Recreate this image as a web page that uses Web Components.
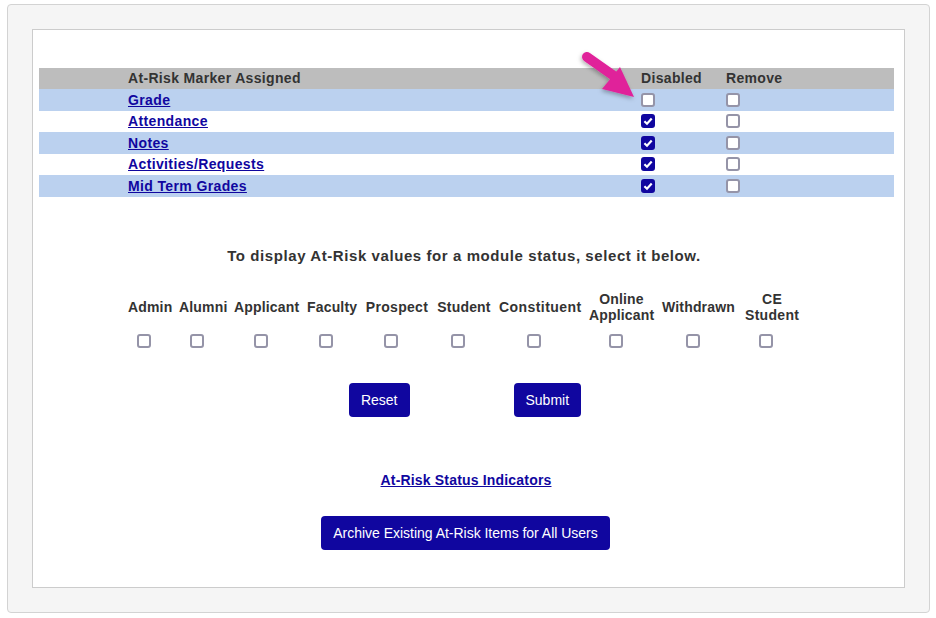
<!DOCTYPE html>
<html lang="en"><head><meta charset="utf-8"><title>At-Risk</title>
<style>
html,body{margin:0;padding:0;background:#fff}
body{font:14px "Liberation Sans",Arial,sans-serif;color:#333}
</style></head><body>
<risk-page></risk-page>
<script>
function el(name, css, html){
  customElements.define(name, class extends HTMLElement{
    constructor(){super();const r=this.attachShadow({mode:'open'});r.innerHTML='<style>'+css+'</style>'+(typeof html==='function'?html(this):html);}
  });
}
el('risk-check',`:host{display:inline-block;width:14px;height:14px;line-height:0;vertical-align:top}
svg{display:block}`,`<svg width="14" height="14" viewBox="0 0 14 14"><rect class="b" x="1" y="1" width="12" height="12" rx="2" fill="#fff" stroke="#9594a8" stroke-width="2"/><path class="c" d="M3.4 7.2 6 9.7 10.7 4.5" fill="none" stroke="#fff" stroke-width="2.2" style="display:none"/></svg>`);
el('risk-link',`:host{display:inline}
a{color:#10069f;font-weight:700;letter-spacing:var(--ls,.37px);text-decoration:underline}`,`<a href="#"><slot></slot></a>`);
el('risk-button',`:host{display:inline-block}
button{display:block;height:34px;padding:0 12px;border:0;border-radius:4px;background:#10069f;color:#fff;font:14px "Liberation Sans",Arial,sans-serif;letter-spacing:var(--bls,0);white-space:nowrap}`,`<button type="button"><slot></slot></button>`);
el('risk-row',`:host{display:grid;grid-template-columns:89px 513px 85px 1fr;align-items:center;height:21.5px;background:var(--bg,#fff)}
.a{grid-column:2}.b{display:flex;align-items:center}`,`<div class="a"><slot name="name"></slot></div><div class="b"><slot name="dis"></slot></div><div class="b"><slot name="rem"></slot></div>`);
el('risk-table',`:host{display:block;margin:0 10px 0 6px;font-weight:700}
.h{display:grid;grid-template-columns:89px 513px 85px 1fr;align-items:center;box-sizing:border-box;height:21px;padding-bottom:1px;background:#bdbdbd;color:#333;letter-spacing:.33px}
.h div:first-child{grid-column:2}`,`<div class="h"><div>At-Risk Marker Assigned</div><div>Disabled</div><div>Remove</div></div><slot></slot>`);
el('risk-status',`:host{display:grid;grid-auto-flow:column;grid-template-rows:32px 14px;grid-template-columns:43px 47px 65px 50px 64px 54px 82px 65px 75px 54px;row-gap:11px;column-gap:8px;justify-content:start;margin-left:95px;font-weight:700;letter-spacing:.17px;line-height:16px;text-align:center}
.l{align-self:center}.c{padding-right:12px;line-height:0}
.w{padding-right:2px}.wc{padding-right:13px}.k{letter-spacing:.44px}.p{letter-spacing:.3px}.s{letter-spacing:.3px}`,(h)=>{
  const n=[['Admin'],['Alumni'],['Applicant'],['Faculty'],['Prospect','','p'],['Student'],['Constituent','','k'],['Online','Applicant'],['Withdrawn','','w'],['CE','Student','s']];
  return n.map(x=>`<div class="l ${x[2]||''}">${x[1]?x[0]+'<br>'+x[1]:x[0]}</div><div class="c ${x[2]==='w'?'wc':''}"><risk-check></risk-check></div>`).join('');
});
el('risk-arrow',`:host{position:absolute;left:567px;top:42px;width:70px;height:60px;pointer-events:none}
svg{display:block;overflow:visible}`,`<svg width="70" height="60" viewBox="0 0 70 60"><defs><filter id="s" x="-30%" y="-30%" width="160%" height="160%"><feDropShadow dx="-1" dy="2" stdDeviation="2" flood-color="#000" flood-opacity=".3"/></filter></defs><g filter="url(#s)" fill="#e0249a"><path d="M12 10 39 29" stroke="#e0249a" stroke-width="10" stroke-linecap="round" fill="none"/><path d="M59 50 27 42 45 20Z"/></g></svg>`);
const rows=[['Grade',0],['Attendance',1],['Notes',1],['Activities/Requests',1],['Mid Term Grades',1]];
el('risk-page',`:host{display:block;position:relative;width:923px;height:609px;box-sizing:border-box;margin:4px 0 0 7px;background:#f5f5f5;border:1px solid #d3d3d3;border-radius:4px;padding:24px}
.in{box-sizing:border-box;height:559px;background:#fff;border:1px solid #cccccc;padding-top:38px;color:#333}
.title{margin:50px 0 0;text-align:center;padding-right:9px;font-size:15px;line-height:18px;font-weight:700;letter-spacing:.58px;color:#333}
risk-status{margin-top:26px}
.btns{display:flex;justify-content:center;gap:104px;margin-top:35px;padding-right:7px}
.lnk{text-align:center;margin-top:54px;line-height:18px;padding-right:5px;--ls:.18px}
.arch{display:flex;justify-content:center;margin-top:27px;padding-right:6px;--bls:-.02px}`,`<risk-arrow></risk-arrow><div class="in">
<risk-table id="t">${rows.map((r,i)=>`<risk-row style="--bg:${i%2?'#fff':'#bbd1ef'}"><risk-link slot="name">${r[0]}</risk-link><risk-check slot="dis" ${r[1]?'data-on':''}></risk-check><risk-check slot="rem"></risk-check></risk-row>`).join('')}</risk-table>
<div class="title">To display At-Risk values for a module status, select it below.</div>
<risk-status></risk-status>
<div class="btns"><risk-button>Reset</risk-button><risk-button>Submit</risk-button></div>
<div class="lnk"><risk-link>At-Risk Status Indicators</risk-link></div>
<div class="arch"><risk-button>Archive Existing At-Risk Items for All Users</risk-button></div>
</div>`);
document.querySelector('risk-page').shadowRoot.querySelectorAll('risk-check[data-on]').forEach(c=>{
  const s=c.shadowRoot;const b=s.querySelector('.b');b.setAttribute('fill','#10069f');b.setAttribute('stroke','#10069f');s.querySelector('.c').style.display='';
});
</script></body></html>
